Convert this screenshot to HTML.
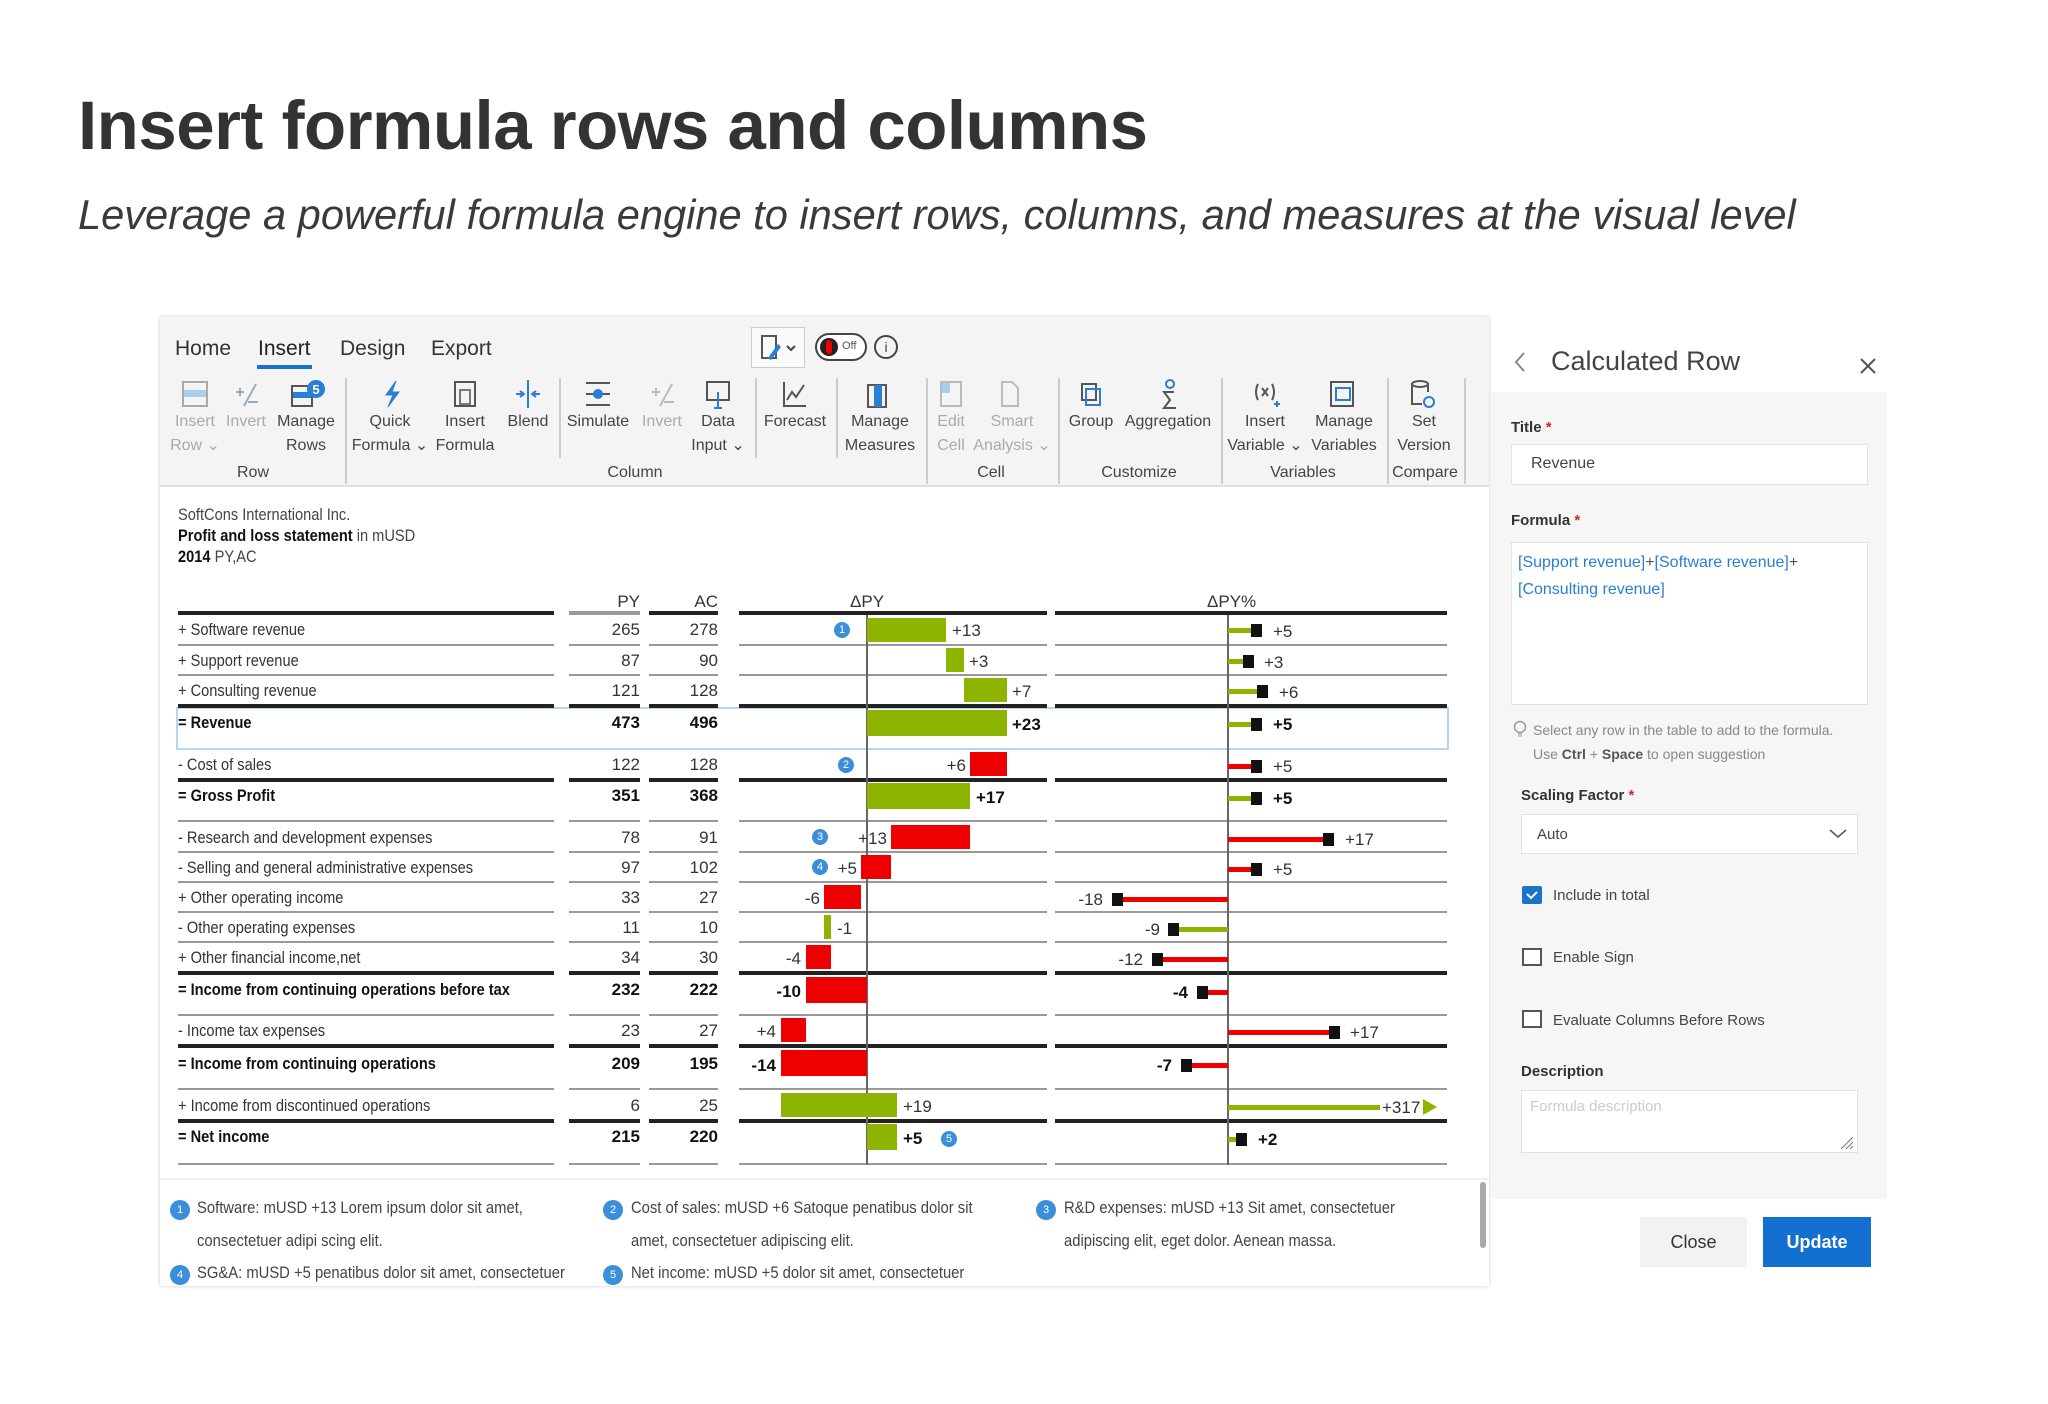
<!DOCTYPE html>
<html><head><meta charset="utf-8">
<style>
*{margin:0;padding:0;box-sizing:border-box}
body{width:2048px;height:1404px;background:#fff;position:relative;overflow:hidden;font-family:"Liberation Sans",sans-serif;color:#333}
.a{position:absolute;white-space:nowrap}
.n{font-family:"Liberation Sans Narrow","Liberation Sans",sans-serif;font-size:17px;line-height:22px;color:#333}
.lb{transform:scaleX(0.86);transform-origin:0 0}
.bd{font-weight:bold;color:#111}
.r{text-align:right}
.tb{font-size:16px;color:#444;text-align:center;line-height:24px}
.dis{color:#aaa}
.sep{position:absolute;width:2px;background:#ccc}
.g{background:#8cb400}
.rd{background:#ee0000}
.mk{position:absolute;width:11px;height:13px;background:#111}
.th{position:absolute;height:2px;background:#999}
.tk{position:absolute;height:4px;background:#222}
.badge{position:absolute;width:16px;height:16px;border-radius:50%;background:#3a8fd8;color:#fff;font-size:11px;line-height:16px;text-align:center;font-family:"Liberation Sans",sans-serif}
.fn{font-family:"Liberation Sans Narrow","Liberation Sans",sans-serif;font-size:17px;color:#444;transform:scaleX(0.87);transform-origin:0 0}
.pl{font-size:15px;color:#333;font-weight:bold}
.cb{position:absolute;width:20px;height:18px;border:2px solid #555;background:#fff}
</style></head><body>

<div class="a" style="left:78px;top:86px;font-size:69px;font-weight:bold;color:#333;letter-spacing:-0.5px;line-height:80px">Insert formula rows and columns</div>
<div class="a" style="left:78px;top:190px;font-size:41.6px;font-style:italic;color:#3a3a3a;line-height:50px">Leverage a powerful formula engine to insert rows, columns, and measures at the visual level</div>

<!-- app frame -->
<div class="a" style="left:160px;top:317px;width:1329px;height:969px;background:#fff;box-shadow:0 0 4px rgba(0,0,0,.2)"></div>
<div class="a" style="left:160px;top:317px;width:1329px;height:170px;background:#f4f4f4;border-bottom:2px solid #ddd"></div>

<!-- tabs -->
<div class="a" style="left:175px;top:337px;font-size:21px;color:#333">Home</div>
<div class="a" style="left:258px;top:337px;font-size:21px;color:#222">Insert</div>
<div class="a" style="left:257px;top:365px;width:55px;height:4px;background:#1a73c8"></div>
<div class="a" style="left:340px;top:337px;font-size:21px;color:#333">Design</div>
<div class="a" style="left:431px;top:337px;font-size:21px;color:#333">Export</div>
<div class="a" style="left:751px;top:327px;width:54px;height:41px;border:1px solid #ccc;background:#fafafa"></div>
<svg class="a" style="left:760px;top:334px" width="40" height="28"><rect x="2" y="2" width="14" height="22" fill="none" stroke="#555" stroke-width="2"/><path d="M8 24 L18 10 L21 13 L11 26 Z" fill="#2a7fd4"/><path d="M27 12 l4 4 l4 -4" fill="none" stroke="#444" stroke-width="2"/></svg>
<div class="a" style="left:815px;top:333px;width:52px;height:28px;border:2px solid #444;border-radius:14px;background:#fff"></div>
<div class="a" style="left:820px;top:338px;width:18px;height:18px;border-radius:50%;background:#222"></div>
<div class="a" style="left:826px;top:340px;width:6px;height:14px;background:#e00;border-radius:3px"></div>
<div class="a" style="left:842px;top:340px;font-size:11px;color:#555">Off</div>
<div class="a" style="left:874px;top:335px;width:24px;height:24px;border:2px solid #444;border-radius:50%;font-size:14px;text-align:center;line-height:20px;color:#444">i</div>

<!-- toolbar separators -->
<div class="sep" style="left:345px;top:378px;height:106px"></div>
<div class="sep" style="left:559px;top:378px;height:80px"></div>
<div class="sep" style="left:755px;top:378px;height:80px"></div>
<div class="sep" style="left:836px;top:378px;height:80px"></div>
<div class="sep" style="left:926px;top:378px;height:106px"></div>
<div class="sep" style="left:1058px;top:378px;height:106px"></div>
<div class="sep" style="left:1221px;top:378px;height:106px"></div>
<div class="sep" style="left:1387px;top:378px;height:106px"></div>
<div class="sep" style="left:1464px;top:378px;height:106px"></div>

<svg class="a" style="left:0;top:0" width="1489" height="420">
<g fill="none" stroke-width="2">
<rect x="183" y="382" width="24" height="24" stroke="#aaa"/><rect x="184" y="390" width="22" height="7" fill="#a9cdec" stroke="none"/>
<path d="M236 392h8M240 388v8M256 384l-12 22M248 402h10" stroke="#9ab"/>
<rect x="292" y="386" width="20" height="20" stroke="#555"/><rect x="293" y="392" width="18" height="6" fill="#2a7fd4" stroke="none"/>
<path d="M396 381l-10 14h7l-5 12 11-15h-7z" fill="#2a7fd4" stroke="#2a7fd4" stroke-width="1"/>
<rect x="455" y="382" width="20" height="24" stroke="#555"/><rect x="460" y="390" width="10" height="14" stroke="#777"/>
<path d="M528 380v28M516 394h8M540 394h-8M520 391l4 3-4 3M536 391l-4 3 4 3" stroke="#2a7fd4"/>
<path d="M586 383h24M586 405h24M586 394h24" stroke="#555"/><circle cx="598" cy="394" r="4" fill="#2a7fd4" stroke="#2a7fd4"/>
<path d="M652 392h8M656 388v8M672 384l-12 22M664 402h10" stroke="#bbb"/>
<rect x="707" y="382" width="22" height="18" stroke="#555"/><path d="M718 392v16M714 408h8" stroke="#2a7fd4"/>
<path d="M784 382v24h22M787 400l5-8 4 5 8-12" stroke="#555"/>
<rect x="868" y="385" width="18" height="22" stroke="#555"/><rect x="874" y="385" width="8" height="22" fill="#2a7fd4" stroke="none"/>
<rect x="941" y="382" width="20" height="24" stroke="#bbb"/><rect x="942" y="383" width="8" height="10" fill="#a9cdec" stroke="none"/>
<path d="M1002 382h10l6 6v18h-16z" stroke="#bbb"/>
<rect x="1082" y="384" width="14" height="16" stroke="#555"/><rect x="1086" y="389" width="14" height="16" stroke="#2a7fd4"/>
<path d="M1174 392h-10l6 8-6 8h12" stroke="#555"/><circle cx="1170" cy="384" r="4" stroke="#2a7fd4"/>
<path d="M1258 384q-4 8 0 16M1272 384q4 8 0 16M1262 388l6 8M1268 388l-6 8" stroke="#555"/><path d="M1274 404h6M1277 401v6" stroke="#2a7fd4"/>
<rect x="1331" y="382" width="22" height="24" stroke="#555"/><rect x="1336" y="388" width="14" height="12" stroke="#2a7fd4"/>
<ellipse cx="1420" cy="384" rx="8" ry="3" stroke="#555"/><path d="M1412 384v20h10M1428 384v8" stroke="#555"/><circle cx="1429" cy="402" r="5" stroke="#2a7fd4"/>
<path d="M1473 422l6 9-6 9" stroke="#666"/>
</g>
<circle cx="316" cy="389" r="9" fill="#2a7fd4"/><text x="316" y="394" font-size="13" fill="#fff" text-anchor="middle" font-family="Liberation Sans" font-weight="bold">5</text>
</svg>

<div class="a tb dis" style="left:165px;top:410px;width:60px">Insert<br>Row ⌄</div>
<div class="a tb dis" style="left:221px;top:410px;width:50px">Invert</div>
<div class="a tb" style="left:271px;top:410px;width:70px">Manage<br>Rows</div>
<div class="a tb" style="left:350px;top:410px;width:80px">Quick<br>Formula ⌄</div>
<div class="a tb" style="left:430px;top:410px;width:70px">Insert<br>Formula</div>
<div class="a tb" style="left:500px;top:410px;width:56px">Blend</div>
<div class="a tb" style="left:563px;top:410px;width:70px">Simulate</div>
<div class="a tb dis" style="left:637px;top:410px;width:50px">Invert</div>
<div class="a tb" style="left:688px;top:410px;width:60px">Data<br>Input ⌄</div>
<div class="a tb" style="left:759px;top:410px;width:72px">Forecast</div>
<div class="a tb" style="left:840px;top:410px;width:80px">Manage<br>Measures</div>
<div class="a tb dis" style="left:930px;top:410px;width:42px">Edit<br>Cell</div>
<div class="a tb dis" style="left:972px;top:410px;width:80px">Smart<br>Analysis ⌄</div>
<div class="a tb" style="left:1062px;top:410px;width:58px">Group</div>
<div class="a tb" style="left:1120px;top:410px;width:96px">Aggregation</div>
<div class="a tb" style="left:1225px;top:410px;width:80px">Insert<br>Variable ⌄</div>
<div class="a tb" style="left:1305px;top:410px;width:78px">Manage<br>Variables</div>
<div class="a tb" style="left:1390px;top:410px;width:68px">Set<br>Version</div>
<div class="a tb" style="left:223px;top:461px;width:60px">Row</div>
<div class="a tb" style="left:595px;top:461px;width:80px">Column</div>
<div class="a tb" style="left:961px;top:461px;width:60px">Cell</div>
<div class="a tb" style="left:1089px;top:461px;width:100px">Customize</div>
<div class="a tb" style="left:1253px;top:461px;width:100px">Variables</div>
<div class="a tb" style="left:1390px;top:461px;width:70px">Compare</div>

<div class="a n lb" style="left:178px;top:504px;color:#444">SoftCons International Inc.</div>
<div class="a n lb" style="left:178px;top:525px;color:#444"><b style="color:#111">Profit and loss statement</b> in mUSD</div>
<div class="a n lb" style="left:178px;top:546px;color:#444"><b style="color:#111">2014</b> PY,AC</div>

<div class="a n r" style="left:569px;top:591px;width:71px">PY</div>
<div class="a n r" style="left:649px;top:591px;width:69px">AC</div>
<div class="a n" style="left:850px;top:591px">ΔPY</div>
<div class="a n" style="left:1207px;top:591px">ΔPY%</div>

<div class="a" style="left:176px;top:707px;width:1273px;height:43px;border:2px solid #b8d4ee"></div>

<div class="tk" style="left:178px;top:611px;width:376px"></div><div class="tk" style="left:569px;top:611px;width:71px;background:#999"></div><div class="tk" style="left:649px;top:611px;width:69px"></div><div class="tk" style="left:739px;top:611px;width:308px"></div><div class="tk" style="left:1055px;top:611px;width:392px"></div>
<div class="th" style="left:178px;top:644px;width:376px"></div><div class="th" style="left:569px;top:644px;width:71px"></div><div class="th" style="left:649px;top:644px;width:69px"></div><div class="th" style="left:739px;top:644px;width:308px"></div><div class="th" style="left:1055px;top:644px;width:392px"></div>
<div class="th" style="left:178px;top:674px;width:376px"></div><div class="th" style="left:569px;top:674px;width:71px"></div><div class="th" style="left:649px;top:674px;width:69px"></div><div class="th" style="left:739px;top:674px;width:308px"></div><div class="th" style="left:1055px;top:674px;width:392px"></div>
<div class="tk" style="left:178px;top:704px;width:376px"></div><div class="tk" style="left:569px;top:704px;width:71px"></div><div class="tk" style="left:649px;top:704px;width:69px"></div><div class="tk" style="left:739px;top:704px;width:308px"></div><div class="tk" style="left:1055px;top:704px;width:392px"></div>
<div class="tk" style="left:178px;top:778px;width:376px"></div><div class="tk" style="left:569px;top:778px;width:71px"></div><div class="tk" style="left:649px;top:778px;width:69px"></div><div class="tk" style="left:739px;top:778px;width:308px"></div><div class="tk" style="left:1055px;top:778px;width:392px"></div>
<div class="th" style="left:178px;top:820px;width:376px"></div><div class="th" style="left:569px;top:820px;width:71px"></div><div class="th" style="left:649px;top:820px;width:69px"></div><div class="th" style="left:739px;top:820px;width:308px"></div><div class="th" style="left:1055px;top:820px;width:392px"></div>
<div class="th" style="left:178px;top:851px;width:376px"></div><div class="th" style="left:569px;top:851px;width:71px"></div><div class="th" style="left:649px;top:851px;width:69px"></div><div class="th" style="left:739px;top:851px;width:308px"></div><div class="th" style="left:1055px;top:851px;width:392px"></div>
<div class="th" style="left:178px;top:881px;width:376px"></div><div class="th" style="left:569px;top:881px;width:71px"></div><div class="th" style="left:649px;top:881px;width:69px"></div><div class="th" style="left:739px;top:881px;width:308px"></div><div class="th" style="left:1055px;top:881px;width:392px"></div>
<div class="th" style="left:178px;top:911px;width:376px"></div><div class="th" style="left:569px;top:911px;width:71px"></div><div class="th" style="left:649px;top:911px;width:69px"></div><div class="th" style="left:739px;top:911px;width:308px"></div><div class="th" style="left:1055px;top:911px;width:392px"></div>
<div class="th" style="left:178px;top:941px;width:376px"></div><div class="th" style="left:569px;top:941px;width:71px"></div><div class="th" style="left:649px;top:941px;width:69px"></div><div class="th" style="left:739px;top:941px;width:308px"></div><div class="th" style="left:1055px;top:941px;width:392px"></div>
<div class="tk" style="left:178px;top:971px;width:376px"></div><div class="tk" style="left:569px;top:971px;width:71px"></div><div class="tk" style="left:649px;top:971px;width:69px"></div><div class="tk" style="left:739px;top:971px;width:308px"></div><div class="tk" style="left:1055px;top:971px;width:392px"></div>
<div class="th" style="left:178px;top:1014px;width:376px"></div><div class="th" style="left:569px;top:1014px;width:71px"></div><div class="th" style="left:649px;top:1014px;width:69px"></div><div class="th" style="left:739px;top:1014px;width:308px"></div><div class="th" style="left:1055px;top:1014px;width:392px"></div>
<div class="tk" style="left:178px;top:1044px;width:376px"></div><div class="tk" style="left:569px;top:1044px;width:71px"></div><div class="tk" style="left:649px;top:1044px;width:69px"></div><div class="tk" style="left:739px;top:1044px;width:308px"></div><div class="tk" style="left:1055px;top:1044px;width:392px"></div>
<div class="th" style="left:178px;top:1088px;width:376px"></div><div class="th" style="left:569px;top:1088px;width:71px"></div><div class="th" style="left:649px;top:1088px;width:69px"></div><div class="th" style="left:739px;top:1088px;width:308px"></div><div class="th" style="left:1055px;top:1088px;width:392px"></div>
<div class="tk" style="left:178px;top:1119px;width:376px"></div><div class="tk" style="left:569px;top:1119px;width:71px"></div><div class="tk" style="left:649px;top:1119px;width:69px"></div><div class="tk" style="left:739px;top:1119px;width:308px"></div><div class="tk" style="left:1055px;top:1119px;width:392px"></div>
<div class="th" style="left:178px;top:1163px;width:376px"></div><div class="th" style="left:569px;top:1163px;width:71px"></div><div class="th" style="left:649px;top:1163px;width:69px"></div><div class="th" style="left:739px;top:1163px;width:308px"></div><div class="th" style="left:1055px;top:1163px;width:392px"></div>

<div class="a" style="left:866px;top:615px;width:2px;height:550px;background:#666"></div>
<div class="a" style="left:1227px;top:615px;width:2px;height:550px;background:#666"></div>

<div class="a n lb" style="left:178px;top:619px">+ Software revenue</div><div class="a n r" style="left:569px;top:619px;width:71px">265</div><div class="a n r" style="left:649px;top:619px;width:69px">278</div>
<div class="a n lb" style="left:178px;top:650px">+ Support revenue</div><div class="a n r" style="left:569px;top:650px;width:71px">87</div><div class="a n r" style="left:649px;top:650px;width:69px">90</div>
<div class="a n lb" style="left:178px;top:680px">+ Consulting revenue</div><div class="a n r" style="left:569px;top:680px;width:71px">121</div><div class="a n r" style="left:649px;top:680px;width:69px">128</div>
<div class="a n bd lb" style="left:178px;top:712px">= Revenue</div><div class="a n bd r" style="left:569px;top:712px;width:71px">473</div><div class="a n bd r" style="left:649px;top:712px;width:69px">496</div>
<div class="a n lb" style="left:178px;top:754px">- Cost of sales</div><div class="a n r" style="left:569px;top:754px;width:71px">122</div><div class="a n r" style="left:649px;top:754px;width:69px">128</div>
<div class="a n bd lb" style="left:178px;top:785px">= Gross Profit</div><div class="a n bd r" style="left:569px;top:785px;width:71px">351</div><div class="a n bd r" style="left:649px;top:785px;width:69px">368</div>
<div class="a n lb" style="left:178px;top:827px">- Research and development expenses</div><div class="a n r" style="left:569px;top:827px;width:71px">78</div><div class="a n r" style="left:649px;top:827px;width:69px">91</div>
<div class="a n lb" style="left:178px;top:857px">- Selling and general administrative expenses</div><div class="a n r" style="left:569px;top:857px;width:71px">97</div><div class="a n r" style="left:649px;top:857px;width:69px">102</div>
<div class="a n lb" style="left:178px;top:887px">+ Other operating income</div><div class="a n r" style="left:569px;top:887px;width:71px">33</div><div class="a n r" style="left:649px;top:887px;width:69px">27</div>
<div class="a n lb" style="left:178px;top:917px">- Other operating expenses</div><div class="a n r" style="left:569px;top:917px;width:71px">11</div><div class="a n r" style="left:649px;top:917px;width:69px">10</div>
<div class="a n lb" style="left:178px;top:947px">+ Other financial income,net</div><div class="a n r" style="left:569px;top:947px;width:71px">34</div><div class="a n r" style="left:649px;top:947px;width:69px">30</div>
<div class="a n bd lb" style="left:178px;top:979px">= Income from continuing operations before tax</div><div class="a n bd r" style="left:569px;top:979px;width:71px">232</div><div class="a n bd r" style="left:649px;top:979px;width:69px">222</div>
<div class="a n lb" style="left:178px;top:1020px">- Income tax expenses</div><div class="a n r" style="left:569px;top:1020px;width:71px">23</div><div class="a n r" style="left:649px;top:1020px;width:69px">27</div>
<div class="a n bd lb" style="left:178px;top:1053px">= Income from continuing operations</div><div class="a n bd r" style="left:569px;top:1053px;width:71px">209</div><div class="a n bd r" style="left:649px;top:1053px;width:69px">195</div>
<div class="a n lb" style="left:178px;top:1095px">+ Income from discontinued operations</div><div class="a n r" style="left:569px;top:1095px;width:71px">6</div><div class="a n r" style="left:649px;top:1095px;width:69px">25</div>
<div class="a n bd lb" style="left:178px;top:1126px">= Net income</div><div class="a n bd r" style="left:569px;top:1126px;width:71px">215</div><div class="a n bd r" style="left:649px;top:1126px;width:69px">220</div>

<div class="a g" style="left:867px;top:618px;width:79px;height:24px"></div><div class="a n" style="left:952px;top:620px">+13</div><div class="badge" style="left:834px;top:622px">1</div>
<div class="a g" style="left:946px;top:648px;width:18px;height:24px"></div><div class="a n" style="left:969px;top:651px">+3</div>
<div class="a g" style="left:964px;top:678px;width:43px;height:24px"></div><div class="a n" style="left:1012px;top:681px">+7</div>
<div class="a g" style="left:867px;top:710px;width:140px;height:26px"></div><div class="a n bd" style="left:1012px;top:714px">+23</div>
<div class="a rd" style="left:970px;top:752px;width:37px;height:24px"></div><div class="a n r" style="left:906px;top:755px;width:60px">+6</div><div class="badge" style="left:838px;top:757px">2</div>
<div class="a g" style="left:867px;top:783px;width:103px;height:26px"></div><div class="a n bd" style="left:976px;top:787px">+17</div>
<div class="a rd" style="left:891px;top:825px;width:79px;height:24px"></div><div class="a n r" style="left:827px;top:828px;width:60px">+13</div><div class="badge" style="left:812px;top:829px">3</div>
<div class="a rd" style="left:861px;top:855px;width:30px;height:24px"></div><div class="a n r" style="left:797px;top:858px;width:60px">+5</div><div class="badge" style="left:812px;top:859px">4</div>
<div class="a rd" style="left:824px;top:885px;width:37px;height:24px"></div><div class="a n r" style="left:760px;top:888px;width:60px">-6</div>
<div class="a g" style="left:824px;top:915px;width:7px;height:24px"></div><div class="a n" style="left:837px;top:918px">-1</div>
<div class="a rd" style="left:806px;top:945px;width:25px;height:24px"></div><div class="a n r" style="left:741px;top:948px;width:60px">-4</div>
<div class="a rd" style="left:806px;top:977px;width:61px;height:26px"></div><div class="a n bd r" style="left:741px;top:981px;width:60px">-10</div>
<div class="a rd" style="left:781px;top:1018px;width:25px;height:24px"></div><div class="a n r" style="left:716px;top:1021px;width:60px">+4</div>
<div class="a rd" style="left:781px;top:1050px;width:86px;height:26px"></div><div class="a n bd r" style="left:716px;top:1055px;width:60px">-14</div>
<div class="a g" style="left:781px;top:1093px;width:116px;height:24px"></div><div class="a n" style="left:903px;top:1096px">+19</div>
<div class="a g" style="left:867px;top:1124px;width:30px;height:26px"></div><div class="a n bd" style="left:903px;top:1128px">+5</div><div class="badge" style="left:941px;top:1131px">5</div>

<div class="a g" style="left:1228px;top:628px;width:24px;height:5px"></div><div class="mk" style="left:1251px;top:624px"></div><div class="a n" style="left:1273px;top:621px">+5</div>
<div class="a g" style="left:1228px;top:659px;width:16px;height:5px"></div><div class="mk" style="left:1243px;top:655px"></div><div class="a n" style="left:1264px;top:652px">+3</div>
<div class="a g" style="left:1228px;top:689px;width:30px;height:5px"></div><div class="mk" style="left:1257px;top:685px"></div><div class="a n" style="left:1279px;top:682px">+6</div>
<div class="a g" style="left:1228px;top:722px;width:24px;height:5px"></div><div class="mk" style="left:1251px;top:718px"></div><div class="a n bd" style="left:1273px;top:714px">+5</div>
<div class="a rd" style="left:1228px;top:764px;width:24px;height:5px"></div><div class="mk" style="left:1251px;top:760px"></div><div class="a n" style="left:1273px;top:756px">+5</div>
<div class="a g" style="left:1228px;top:796px;width:24px;height:5px"></div><div class="mk" style="left:1251px;top:792px"></div><div class="a n bd" style="left:1273px;top:788px">+5</div>
<div class="a rd" style="left:1228px;top:837px;width:96px;height:5px"></div><div class="mk" style="left:1323px;top:833px"></div><div class="a n" style="left:1345px;top:829px">+17</div>
<div class="a rd" style="left:1228px;top:867px;width:24px;height:5px"></div><div class="mk" style="left:1251px;top:863px"></div><div class="a n" style="left:1273px;top:859px">+5</div>
<div class="a rd" style="left:1117px;top:897px;width:111px;height:5px"></div><div class="mk" style="left:1112px;top:893px"></div><div class="a n r" style="left:1043px;top:889px;width:60px">-18</div>
<div class="a g" style="left:1173px;top:927px;width:55px;height:5px"></div><div class="mk" style="left:1168px;top:923px"></div><div class="a n r" style="left:1100px;top:919px;width:60px">-9</div>
<div class="a rd" style="left:1157px;top:957px;width:71px;height:5px"></div><div class="mk" style="left:1152px;top:953px"></div><div class="a n r" style="left:1083px;top:949px;width:60px">-12</div>
<div class="a rd" style="left:1202px;top:990px;width:26px;height:5px"></div><div class="mk" style="left:1197px;top:986px"></div><div class="a n bd r" style="left:1128px;top:982px;width:60px">-4</div>
<div class="a rd" style="left:1228px;top:1030px;width:102px;height:5px"></div><div class="mk" style="left:1329px;top:1026px"></div><div class="a n" style="left:1350px;top:1022px">+17</div>
<div class="a rd" style="left:1186px;top:1063px;width:42px;height:5px"></div><div class="mk" style="left:1181px;top:1059px"></div><div class="a n bd r" style="left:1112px;top:1055px;width:60px">-7</div>
<div class="a g" style="left:1228px;top:1105px;width:152px;height:5px"></div><div class="a n" style="left:1382px;top:1097px">+317</div>
<svg class="a" style="left:1423px;top:1099px" width="14" height="16"><path d="M0 0L14 8L0 16Z" fill="#8cb400"/></svg>
<div class="a g" style="left:1228px;top:1137px;width:10px;height:5px"></div><div class="mk" style="left:1236px;top:1133px"></div><div class="a n bd" style="left:1258px;top:1129px">+2</div>

<div class="a" style="left:160px;top:1178px;width:1329px;height:2px;background:#eee"></div>
<div class="badge" style="left:170px;top:1200px;width:20px;height:20px;line-height:20px">1</div><div class="a fn" style="left:197px;top:1198px">Software: mUSD +13 Lorem ipsum dolor sit amet,</div>
<div class="a fn" style="left:197px;top:1231px">consectetuer adipi scing elit.</div>
<div class="badge" style="left:170px;top:1265px;width:20px;height:20px;line-height:20px">4</div><div class="a fn" style="left:197px;top:1263px">SG&amp;A: mUSD +5 penatibus dolor sit amet, consectetuer</div>
<div class="badge" style="left:603px;top:1200px;width:20px;height:20px;line-height:20px">2</div><div class="a fn" style="left:631px;top:1198px">Cost of sales: mUSD +6 Satoque penatibus dolor sit</div>
<div class="a fn" style="left:631px;top:1231px">amet, consectetuer adipiscing elit.</div>
<div class="badge" style="left:603px;top:1265px;width:20px;height:20px;line-height:20px">5</div><div class="a fn" style="left:631px;top:1263px">Net income: mUSD +5 dolor sit amet, consectetuer</div>
<div class="badge" style="left:1036px;top:1200px;width:20px;height:20px;line-height:20px">3</div><div class="a fn" style="left:1064px;top:1198px">R&amp;D expenses: mUSD +13 Sit amet, consectetuer</div>
<div class="a fn" style="left:1064px;top:1231px">adipiscing elit, eget dolor. Aenean massa.</div>
<div class="a" style="left:1480px;top:1182px;width:6px;height:66px;background:#aaa;border-radius:3px"></div>

<div class="a" style="left:1491px;top:320px;width:396px;height:879px;background:#f6f6f6"></div>
<div class="a" style="left:1491px;top:320px;width:396px;height:72px;background:#fff"></div>
<svg class="a" style="left:1512px;top:350px" width="16" height="24"><path d="M12 3L4 12L12 21" fill="none" stroke="#888" stroke-width="2"/></svg>
<div class="a" style="left:1551px;top:346px;font-size:27px;color:#444">Calculated Row</div>
<svg class="a" style="left:1859px;top:357px" width="18" height="18"><path d="M2 2L16 16M16 2L2 16" stroke="#555" stroke-width="2"/></svg>

<div class="a pl" style="left:1511px;top:419px">Title <span style="color:#d22">*</span></div>
<div class="a" style="left:1511px;top:444px;width:357px;height:41px;background:#fff;border:1px solid #e3e3e3"></div>
<div class="a" style="left:1531px;top:455px;font-size:16px;color:#444">Revenue</div>
<div class="a pl" style="left:1511px;top:512px">Formula <span style="color:#d22">*</span></div>
<div class="a" style="left:1511px;top:542px;width:357px;height:163px;background:#fff;border:1px solid #e3e3e3"></div>
<div class="a" style="left:1518px;top:549px;font-size:16px;color:#2a7fd4;line-height:27px">[Support revenue]<span style="color:#555">+</span>[Software revenue]<span style="color:#555">+</span><br>[Consulting revenue]</div>
<svg class="a" style="left:1513px;top:720px" width="14" height="18"><circle cx="7" cy="7" r="5.5" fill="none" stroke="#999" stroke-width="1.5"/><path d="M5 14h4M5 16h4" stroke="#999"/></svg>
<div class="a" style="left:1533px;top:718px;font-size:14px;color:#888;line-height:24px">Select any row in the table to add to the formula.<br>Use <b style="color:#555">Ctrl</b> + <b style="color:#555">Space</b> to open suggestion</div>
<div class="a pl" style="left:1521px;top:787px">Scaling Factor <span style="color:#d22">*</span></div>
<div class="a" style="left:1521px;top:814px;width:337px;height:40px;background:#fff;border:1px solid #e3e3e3"></div>
<div class="a" style="left:1537px;top:826px;font-size:15px;color:#444">Auto</div>
<svg class="a" style="left:1829px;top:828px" width="18" height="12"><path d="M1 2L9 9L17 2" fill="none" stroke="#555" stroke-width="1.5"/></svg>
<div class="a" style="left:1522px;top:886px;width:20px;height:18px;background:#1a73c8;border-radius:2px"></div>
<svg class="a" style="left:1524px;top:888px" width="16" height="14"><path d="M3 6L7 10L13 4" fill="none" stroke="#fff" stroke-width="2"/></svg>
<div class="a" style="left:1553px;top:887px;font-size:15px;color:#444">Include in total</div>
<div class="cb" style="left:1522px;top:948px"></div>
<div class="a" style="left:1553px;top:949px;font-size:15px;color:#444">Enable Sign</div>
<div class="cb" style="left:1522px;top:1010px"></div>
<div class="a" style="left:1553px;top:1012px;font-size:15px;color:#444">Evaluate Columns Before Rows</div>
<div class="a pl" style="left:1521px;top:1063px">Description</div>
<div class="a" style="left:1521px;top:1090px;width:337px;height:63px;background:#fff;border:1px solid #e3e3e3"></div>
<div class="a" style="left:1530px;top:1098px;font-size:15px;color:#ccc">Formula description</div>
<svg class="a" style="left:1838px;top:1134px" width="16" height="16"><path d="M15 3L3 15M15 8L8 15M15 12L12 15" stroke="#777"/></svg>

<div class="a" style="left:1640px;top:1217px;width:107px;height:50px;background:#f2f2f2;font-size:18px;color:#333;text-align:center;line-height:50px">Close</div>
<div class="a" style="left:1763px;top:1217px;width:108px;height:50px;background:#1470d0;font-size:18px;color:#fff;text-align:center;line-height:50px;font-weight:bold">Update</div>
</body></html>
